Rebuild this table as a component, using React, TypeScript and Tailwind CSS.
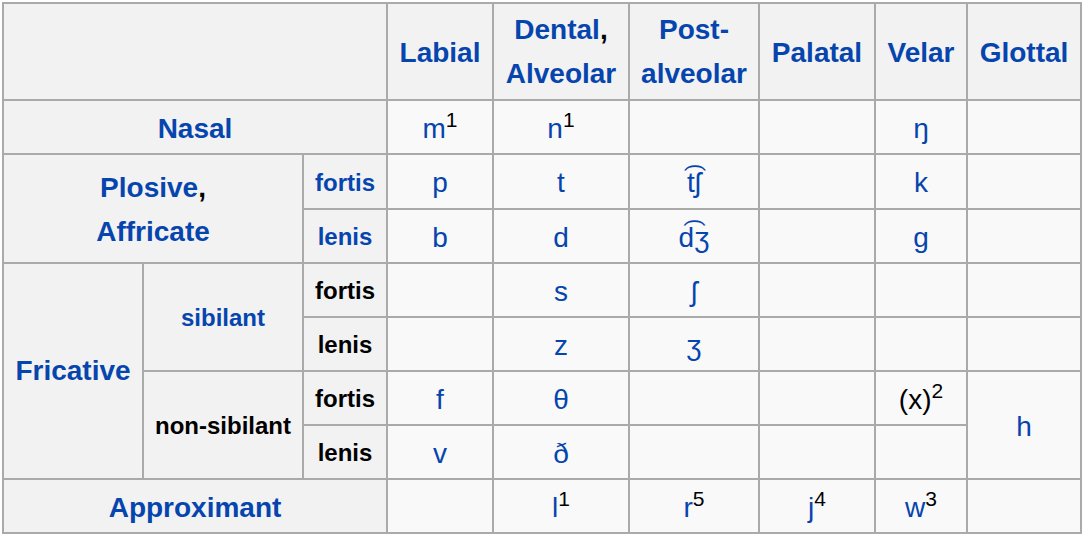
import type { ReactNode } from "react";

// ─── Consonant table ─────────────────────────────────────────────────────────

const font = "font-['Liberation_Sans','DejaVu_Sans',Arial,sans-serif]";
const blue = "text-[#0645ad]";

function Th({ children, className = "" }: { children?: ReactNode; className?: string }) {
  return (
    <div
      className={`flex items-center justify-center text-center bg-[#f2f2f2] font-bold leading-[44px] ${className}`}
    >
      <div>{children}</div>
    </div>
  );
}

function Td({ children, className = "" }: { children?: ReactNode; className?: string }) {
  return (
    <div
      className={`flex items-center justify-center text-center bg-[#f9f9f9] text-[28px] leading-[44px] pt-[3px] ${blue} ${className}`}
    >
      <div>{children}</div>
    </div>
  );
}

function Sup({ n }: { n: number }) {
  return <sup className="text-black text-[21px]">{n}</sup>;
}

export default function App() {
  return (
    <div className={`bg-white min-h-[534px] ${font}`}>
      <div className="ml-[2px] mt-[2px] w-fit grid gap-[2px] p-[2px] bg-[#aaaaaa] grid-cols-[138px_158px_82px_104px_134px_128px_114px_90px_112px] grid-rows-[95px_52px_53px_52px_52px_52px_52px_52px_52px]">
        {/* header */}
        <Th className="col-span-3" />
        <Th className={`text-[28px] pt-[2px] ${blue}`}>Labial</Th>
        <Th className={`text-[28px] ${blue}`}>
          Dental<span className="text-black">,</span>
          <br />
          Alveolar
        </Th>
        <Th className={`text-[28px] ${blue}`}>
          Post-
          <br />
          alveolar
        </Th>
        <Th className={`text-[28px] pt-[2px] ${blue}`}>Palatal</Th>
        <Th className={`text-[28px] pt-[2px] ${blue}`}>Velar</Th>
        <Th className={`text-[28px] pt-[2px] ${blue}`}>Glottal</Th>

        {/* nasal */}
        <Th className={`col-span-3 text-[28px] pt-[3px] ${blue}`}>Nasal</Th>
        <Td>
          m<Sup n={1} />
        </Td>
        <Td>
          n<Sup n={1} />
        </Td>
        <Td />
        <Td />
        <Td>ŋ</Td>
        <Td />

        {/* plosive, affricate */}
        <Th className={`col-span-2 row-span-2 text-[28px] pt-[2px] ${blue}`}>
          Plosive<span className="text-black">,</span>
          <br />
          Affricate
        </Th>
        <Th className={`text-[24px] pt-[2px] ${blue}`}>fortis</Th>
        <Td>p</Td>
        <Td>t</Td>
        <Td>t͡ʃ</Td>
        <Td />
        <Td>k</Td>
        <Td />
        <Th className={`text-[24px] pt-[2px] ${blue}`}>lenis</Th>
        <Td>b</Td>
        <Td>d</Td>
        <Td>d͡ʒ</Td>
        <Td />
        <Td>g</Td>
        <Td />

        {/* fricative */}
        <Th className={`row-span-4 text-[28px] ${blue}`}>Fricative</Th>
        <Th className={`row-span-2 text-[24px] pt-[2px] ${blue}`}>sibilant</Th>
        <Th className="text-[24px] pt-[2px] text-black">fortis</Th>
        <Td />
        <Td>s</Td>
        <Td>ʃ</Td>
        <Td />
        <Td />
        <Td />
        <Th className="text-[24px] pt-[2px] text-black">lenis</Th>
        <Td />
        <Td>z</Td>
        <Td>ʒ</Td>
        <Td />
        <Td />
        <Td />
        <Th className="row-span-2 text-[24px] pt-[2px] text-black">non-sibilant</Th>
        <Th className="text-[24px] pt-[2px] text-black">fortis</Th>
        <Td>f</Td>
        <Td>θ</Td>
        <Td />
        <Td />
        <Td className="!text-black">
          (x)<Sup n={2} />
        </Td>
        <Td className="row-span-2">h</Td>
        <Th className="text-[24px] pt-[2px] text-black">lenis</Th>
        <Td>v</Td>
        <Td>ð</Td>
        <Td />
        <Td />
        <Td />

        {/* approximant */}
        <Th className={`col-span-3 text-[28px] pt-[3px] ${blue}`}>Approximant</Th>
        <Td />
        <Td>
          l<Sup n={1} />
        </Td>
        <Td>
          r<Sup n={5} />
        </Td>
        <Td>
          j<Sup n={4} />
        </Td>
        <Td>
          w<Sup n={3} />
        </Td>
        <Td />
      </div>
    </div>
  );
}
